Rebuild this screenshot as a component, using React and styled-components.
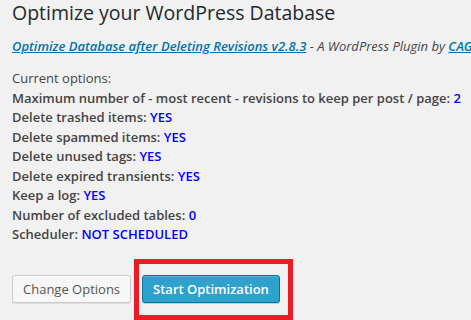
import React from "react";
import styled, { createGlobalStyle } from "styled-components";

const Global = createGlobalStyle`
  html, body { margin: 0; padding: 0; background: #f1f1f1; }
  body { overflow: hidden; font-family: "Open Sans", "Liberation Sans", sans-serif; }
`;

const Page = styled.div`
  width: 471px;
  height: 320px;
  padding: 0 0 0 12px;
  box-sizing: border-box;
  color: #444;
  font-size: 13px;
  overflow: hidden;
`;

const Title = styled.h1`
  margin: 0;
  padding-top: 0;
  font-size: 19.5px;
  line-height: 26px;
  font-weight: 400;
  color: #23282d;
  white-space: nowrap;
`;

const Byline = styled.p`
  margin: 11px 0 0;
  font-style: italic;
  font-size: 13px;
  line-height: 19px;
  white-space: nowrap;
`;

const Link = styled.a`
  color: #0073aa;
  font-weight: 600;
  text-decoration: underline;
`;

const Options = styled.div`
  margin-top: 13px;
  line-height: 19.5px;
`;

const Row = styled.div`
  font-weight: ${(p) => (p.$plain ? 400 : 600)};
  white-space: nowrap;
`;

const Value = styled.span`
  color: #0000ff;
`;

const Actions = styled.div`
  display: flex;
  align-items: center;
  margin-top: 14px;
`;

const Button = styled.button`
  height: 28px;
  padding: 0 10px 1px;
  font-family: inherit;
  font-size: 13px;
  line-height: 26px;
  border-radius: 3px;
  border: 1px solid ${(p) => (p.$primary ? "#0074a2" : "#cccccc")};
  background: ${(p) => (p.$primary ? "#2ea2cc" : "#f7f7f7")};
  color: ${(p) => (p.$primary ? "#ffffff" : "#555555")};
  font-weight: ${(p) => (p.$primary ? 600 : 400)};
  box-shadow: ${(p) =>
    p.$primary
      ? "inset 0 1px 0 rgba(120,200,230,.5), 0 1px 0 rgba(0,0,0,.15)"
      : "inset 0 1px 0 #fff, 0 1px 0 rgba(0,0,0,.08)"};
  cursor: pointer;
`;

const Highlight = styled.div`
  margin-left: 3px;
  padding: 11px 8px 12px 3px;
  border: 5px solid #ed1c24;
`;

const options = [
  ["Maximum number of - most recent - revisions to keep per post / page:", "2"],
  ["Delete trashed items:", "YES"],
  ["Delete spammed items:", "YES"],
  ["Delete unused tags:", "YES"],
  ["Delete expired transients:", "YES"],
  ["Keep a log:", "YES"],
  ["Number of excluded tables:", "0"],
  ["Scheduler:", "NOT SCHEDULED"],
];

export default function App() {
  return (
    <Page>
      <Global />
      <Title>Optimize your WordPress Database</Title>
      <Byline>
        <Link href="#">Optimize Database after Deleting Revisions v2.8.3</Link>
        {" - A WordPress Plugin by "}
        <Link href="#">CAGE Web Design | Rolf van Gelder</Link>
      </Byline>
      <Options>
        <Row $plain>Current options:</Row>
        {options.map(([label, value]) => (
          <Row key={label}>
            {label} <Value>{value}</Value>
          </Row>
        ))}
      </Options>
      <Actions>
        <Button>Change Options</Button>
        <Highlight>
          <Button $primary>Start Optimization</Button>
        </Highlight>
      </Actions>
    </Page>
  );
}
